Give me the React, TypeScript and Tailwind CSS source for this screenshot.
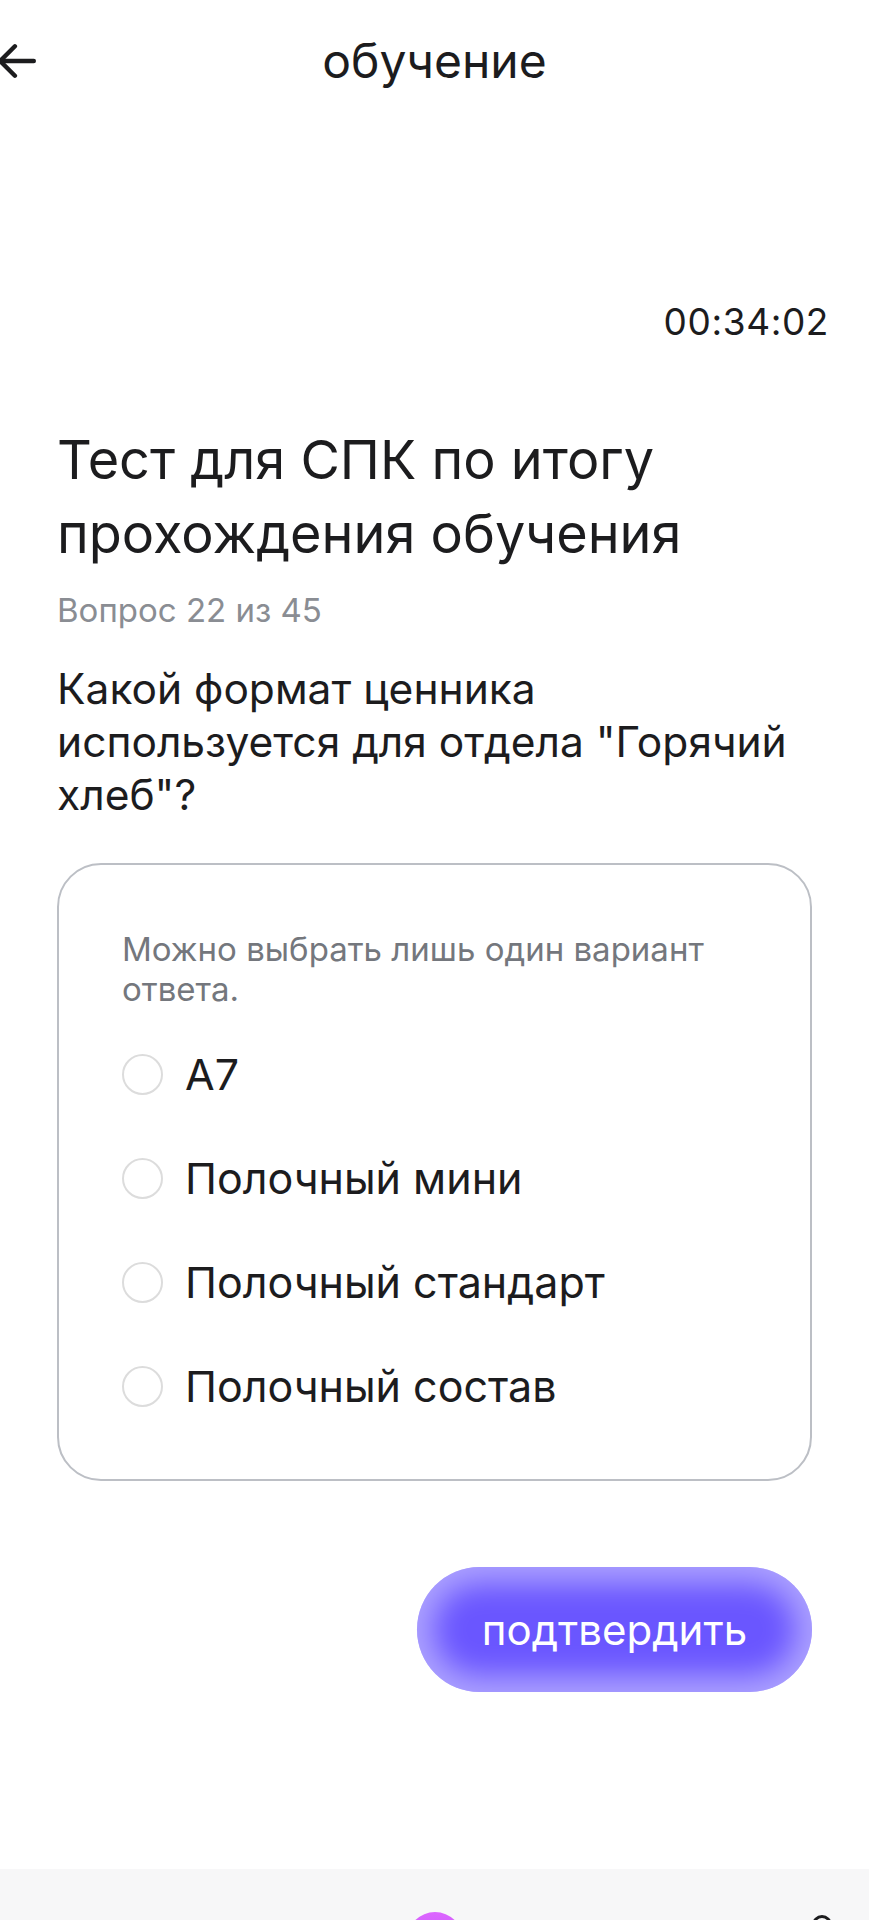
export default function App() {
  const options = ['А7', 'Полочный мини', 'Полочный стандарт', 'Полочный состав'];

  return (
    <div className="w-[869px] h-[1920px] bg-white flex flex-col overflow-hidden text-[#1c1c1e] font-['Inter','Noto_Sans',sans-serif]">
      {/* шапка */}
      <header className="h-[122px] grid grid-cols-[1fr_auto_1fr] items-center">
        <div className="-ml-[4px]">
          <svg width="42" height="42" viewBox="0 0 40 40" fill="none" stroke="#1c1c1e" strokeWidth="4.2" strokeLinecap="round" strokeLinejoin="round">
            <path d="M36 20H5" />
            <path d="M18 6L4 20l14 14" />
          </svg>
        </div>
        <h1 className="text-[48px] leading-none">обучение</h1>
        <div />
      </header>

      <div className="px-[57px] flex flex-col">
        <div className="mt-[180px] text-right -mr-[17px] text-[37px] leading-[40px] tracking-[0.6px]">00:34:02</div>

        <h2 className="mt-[81px] text-[54px] leading-[74px]">
          Тест для СПК по итогу
          <br />
          прохождения обучения
        </h2>
        <p className="mt-[19px] text-[33px] leading-[40px] text-[#8a8d93]">Вопрос 22 из 45</p>

        <p className="mt-[32px] text-[42.5px] leading-[53px]">
          Какой формат ценника используется для отдела "Горячий хлеб"?
        </p>

        {/* варианты */}
        <div className="mt-[42px] border-2 border-[#bcbfc5] rounded-[44px] pt-[64px] pb-[41px] pl-[63px] pr-[40px]">
          <p className="text-[33px] leading-[40px] text-[#74777d]">Можно выбрать лишь один вариант ответа.</p>
          <div className="mt-[13px] flex flex-col">
            {options.map((o) => (
              <label key={o} className="h-[104px] flex items-center gap-[22px]">
                <span className="w-[41px] h-[41px] rounded-full border-2 border-[#dcdcdc] shrink-0" />
                <span className="text-[43px] leading-none">{o}</span>
              </label>
            ))}
          </div>
        </div>

        <div className="mt-[86px] flex justify-end">
          <button className="w-[395px] h-[125px] rounded-full bg-[#6a56ff] text-white text-[42px] shadow-[inset_0_0_30px_16px_rgba(255,255,255,0.45)]">
            подтвердить
          </button>
        </div>
      </div>

      {/* нижняя навигация */}
      <nav className="mt-auto h-[51px] bg-[#f7f7f8] relative">
        <div className="absolute left-[407px] top-[43px] w-[56px] h-[56px] rounded-full bg-gradient-to-b from-[#dd66ff] to-[#b54cf5]" />
        <div className="absolute left-[812px] top-[46px] w-[20px] h-[20px] rounded-full border-[3px] border-[#1c1c1e]" />
      </nav>
    </div>
  );
}
